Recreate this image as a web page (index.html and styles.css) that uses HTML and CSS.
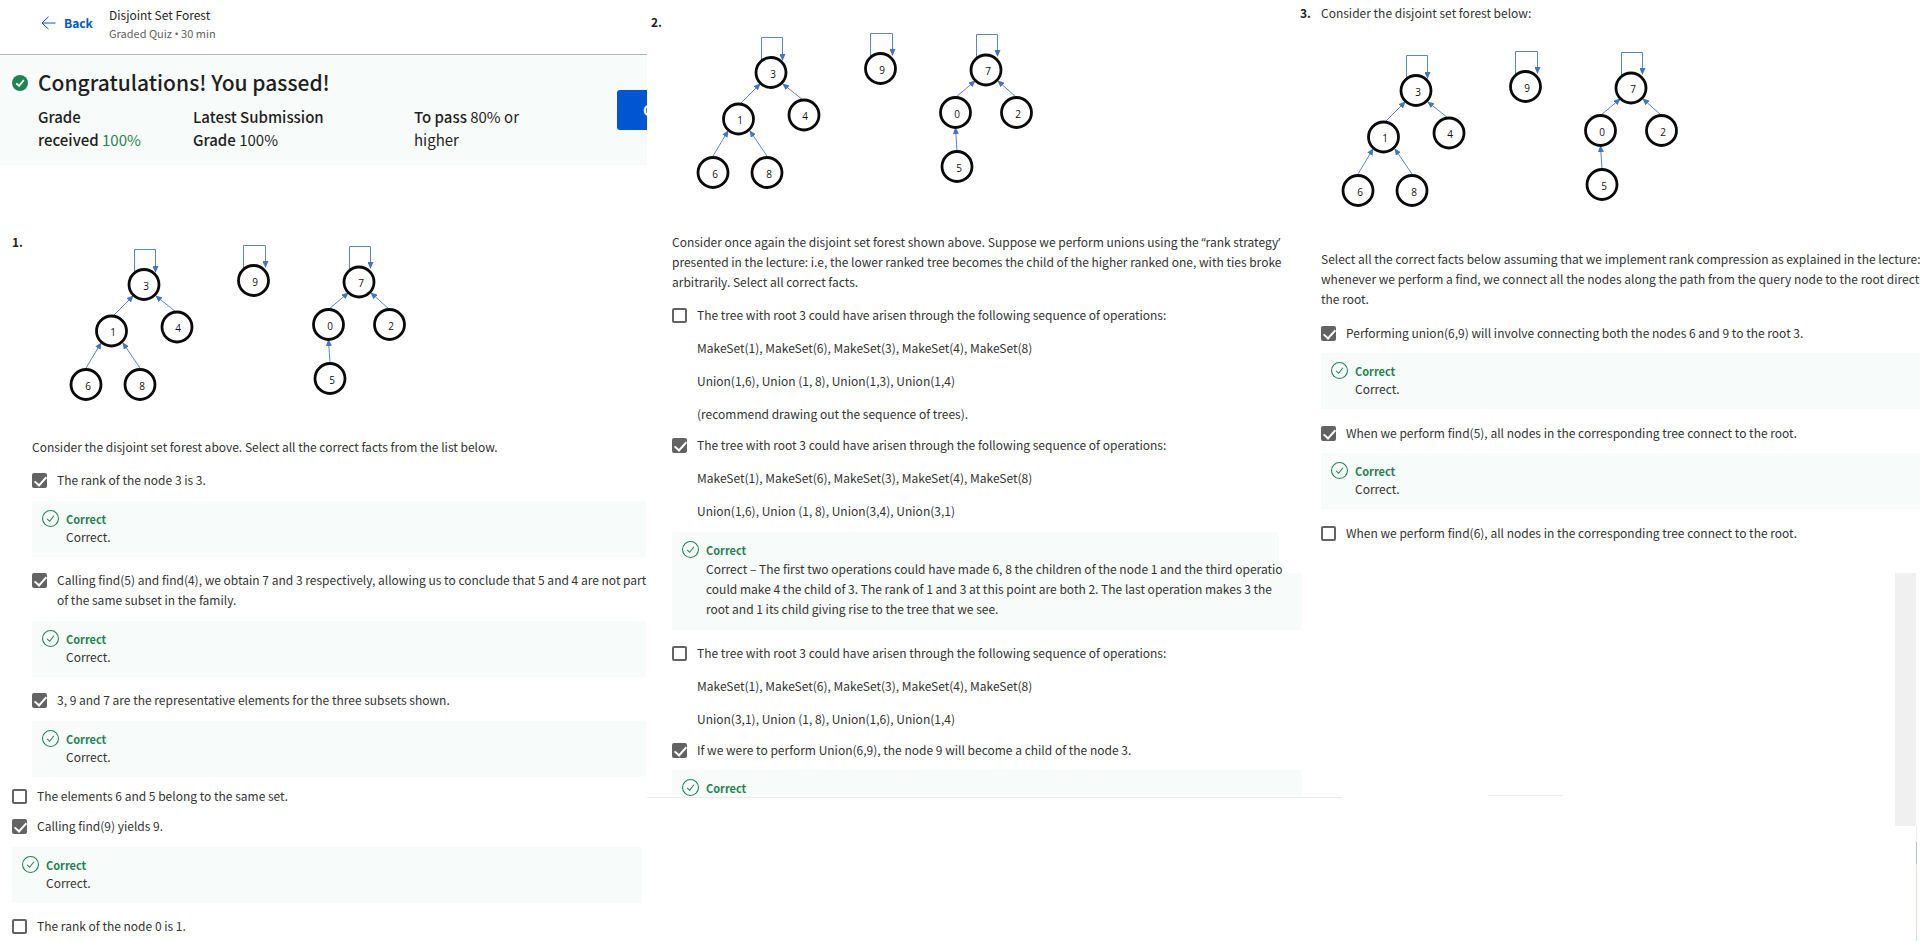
FILE: index.html
```html
<!DOCTYPE html>
<html lang="en">
<head>
<meta charset="utf-8">
<title>Disjoint Set Forest</title>
<link rel="stylesheet" href="styles.css">
</head>
<body>
<svg class="defs" aria-hidden="true">
  <defs>
    <marker id="tip" markerUnits="userSpaceOnUse" markerWidth="8" markerHeight="6" refX="6" refY="3" orient="auto"><path d="M0 0L7 3L0 6Z" fill="#4472c4"/></marker>
    <symbol id="forest" viewBox="0 0 360 180">
      <g fill="none" stroke="#5b84cc" stroke-width="1">
        <path d="M74.5 38V14.500H95.500V37" marker-end="url(#tip)"/>
        <path d="M183.500 34V10.500H205.500V32" marker-end="url(#tip)"/>
        <path d="M289.500 35V11.500H310.500V33" marker-end="url(#tip)"/>
        <path d="M53 81L73 61" marker-end="url(#tip)"/>
        <path d="M116 77L96 61" marker-end="url(#tip)"/>
        <path d="M26 133L41 108" marker-end="url(#tip)"/>
        <path d="M80 133L63 108" marker-end="url(#tip)"/>
        <path d="M269 74L288 58" marker-end="url(#tip)"/>
        <path d="M329 74L311 58" marker-end="url(#tip)"/>
        <path d="M270 128L268.500 105" marker-end="url(#tip)"/>
      </g>
      <g fill="#fff" stroke="#0a0a0a" stroke-width="2.800">
        <circle cx="84" cy="49.500" r="15"/><circle cx="193.500" cy="45.500" r="15"/><circle cx="299" cy="47" r="15"/>
        <circle cx="51.500" cy="96" r="15"/><circle cx="117" cy="92" r="15"/><circle cx="268.500" cy="89.500" r="15"/>
        <circle cx="329.500" cy="89.500" r="15"/><circle cx="26" cy="149.500" r="15"/><circle cx="80" cy="149.500" r="15"/>
        <circle cx="270" cy="143.500" r="15"/>
      </g>
      <g class="labels">
        <text x="86" y="55">3</text><text x="195" y="51">9</text><text x="301" y="52">7</text>
        <text x="53" y="101">1</text><text x="118" y="97">4</text><text x="270" y="95">0</text>
        <text x="331" y="95">2</text><text x="28" y="155">6</text><text x="82" y="155">8</text><text x="272" y="149">5</text>
      </g>
    </symbol>
    <symbol id="ring" viewBox="0 0 16 16"><circle cx="8" cy="8" r="7.500" fill="none" stroke="#1f8354"/><path d="M4.800 8.300L7.200 10.600L11.200 5.400" fill="none" stroke="#1f8354"/></symbol>
  </defs>
</svg>
<main class="sheet">
  <div class="col first">
    <header class="top">
      <a class="back" href="#"><svg viewBox="0 0 15 14" width="15" height="14" fill="none" stroke="#0056d2"><path d="M14.500 7H1M7.500 .800L1 7L7.500 13.200"/></svg>Back</a>
      <div class="heading"><h1>Disjoint Set Forest</h1><p>Graded Quiz <span class="mark">•</span> 30 min</p></div>
    </header>
    <section class="banner">
      <svg class="passed" viewBox="0 0 16 16" width="16" height="16"><circle cx="8" cy="8" r="8" fill="#1f8354"/><path d="M4.300 8.400L7 10.900L11.800 5.200" fill="none" stroke="#fff" stroke-width="1.800"/></svg>
      <div class="result">
        <h2>Congratulations! You passed!</h2>
        <div class="grades">
          <p class="g1"><b>Grade<br>received</b> <span class="green">100%</span></p>
          <p class="g2"><b>Latest Submission<br>Grade</b> 100%</p>
          <p class="g3"><b>To pass</b> 80% or<br>higher</p>
        </div>
      </div>
      <button class="go" type="button">Go to next item</button>
    </section>
    <section class="question q1">
      <div class="num">1.</div>
      <div class="body">
        <svg class="figure" role="img" aria-label="Disjoint set forest"><use href="#forest"/></svg>
        <p class="prompt">Consider the disjoint set forest above. Select all the correct facts from the list below.</p>
        <label class="option"><input type="checkbox" checked><span>The rank of the node 3 is 3.</span></label>
        <div class="feedback"><svg class="ring"><use href="#ring"/></svg><div><b>Correct</b><p>Correct.</p></div></div>
        <label class="option"><input type="checkbox" checked><span>Calling find(5) and find(4), we obtain 7 and 3 respectively, allowing us to conclude that 5 and 4 are not part<br>of the same subset in the family.</span></label>
        <div class="feedback"><svg class="ring"><use href="#ring"/></svg><div><b>Correct</b><p>Correct.</p></div></div>
        <label class="option"><input type="checkbox" checked><span>3, 9 and 7 are the representative elements for the three subsets shown.</span></label>
        <div class="feedback"><svg class="ring"><use href="#ring"/></svg><div><b>Correct</b><p>Correct.</p></div></div>
      </div>
    </section>
    <section class="rest">
      <label class="option"><input type="checkbox"><span>The elements 6 and 5 belong to the same set.</span></label>
      <label class="option"><input type="checkbox" checked><span>Calling find(9) yields 9.</span></label>
      <div class="feedback"><svg class="ring"><use href="#ring"/></svg><div><b>Correct</b><p>Correct.</p></div></div>
      <label class="option"><input type="checkbox"><span>The rank of the node 0 is 1.</span></label>
    </section>
  </div>

  <div class="col second">
    <section class="question q2">
      <div class="num">2.</div>
      <div class="body">
        <svg class="figure" role="img" aria-label="Disjoint set forest"><use href="#forest"/></svg>
        <p class="prompt">Consider once again the disjoint set forest shown above. Suppose we perform unions using the <span class="mark">“</span>rank strategy<span class="mark">’</span><br>presented in the lecture: i.e, the lower ranked tree becomes the child of the higher ranked one, with ties broke<br>arbitrarily. Select all correct facts.</p>
        <label class="option"><input type="checkbox"><span class="steps"><span>The tree with root 3 could have arisen through the following sequence of operations:</span><span>MakeSet(1), MakeSet(6), MakeSet(3), MakeSet(4), MakeSet(8)</span><span>Union(1,6), Union (1, 8), Union(1,3), Union(1,4)</span><span>(recommend drawing out the sequence of trees).</span></span></label>
        <label class="option"><input type="checkbox" checked><span class="steps"><span>The tree with root 3 could have arisen through the following sequence of operations:</span><span>MakeSet(1), MakeSet(6), MakeSet(3), MakeSet(4), MakeSet(8)</span><span>Union(1,6), Union (1, 8), Union(3,4), Union(3,1)</span></span></label>
        <div class="feedback notched"><svg class="ring"><use href="#ring"/></svg><div><b>Correct</b><p>Correct – The first two operations could have made 6, 8 the children of the node 1 and the third operatio<br>could make 4 the child of 3. The rank of 1 and 3 at this point are both 2. The last operation makes 3 the<br>root and 1 its child giving rise to the tree that we see.</p></div></div>
        <label class="option"><input type="checkbox"><span class="steps"><span>The tree with root 3 could have arisen through the following sequence of operations:</span><span>MakeSet(1), MakeSet(6), MakeSet(3), MakeSet(4), MakeSet(8)</span><span>Union(3,1), Union (1, 8), Union(1,6), Union(1,4)</span></span></label>
        <label class="option"><input type="checkbox" checked><span>If we were to perform Union(6,9), the node 9 will become a child of the node 3.</span></label>
        <div class="feedback cut"><svg class="ring"><use href="#ring"/></svg><div><b>Correct</b></div></div>
      </div>
    </section>
    <hr class="line">
  </div>

  <div class="col third">
    <section class="question q3">
      <div class="num">3.</div>
      <div class="body">
        <p class="prompt">Consider the disjoint set forest below:</p>
        <svg class="figure" role="img" aria-label="Disjoint set forest"><use href="#forest"/></svg>
        <p class="prompt">Select all the correct facts below assuming that we implement rank compression as explained in the lecture:<br>whenever we perform a find, we connect all the nodes along the path from the query node to the root directly<br>the root.</p>
        <label class="option"><input type="checkbox" checked><span>Performing union(6,9) will involve connecting both the nodes 6 and 9 to the root 3.</span></label>
        <div class="feedback"><svg class="ring"><use href="#ring"/></svg><div><b>Correct</b><p>Correct.</p></div></div>
        <label class="option"><input type="checkbox" checked><span>When we perform find(5), all nodes in the corresponding tree connect to the root.</span></label>
        <div class="feedback"><svg class="ring"><use href="#ring"/></svg><div><b>Correct</b><p>Correct.</p></div></div>
        <label class="option"><input type="checkbox"><span>When we perform find(6), all nodes in the corresponding tree connect to the root.</span></label>
      </div>
    </section>
    <div class="tail"><hr class="dash"><div class="track"></div></div>
    <div class="edge"></div>
  </div>
</main>
</body>
</html>
```

FILE: styles.css
```css
* { box-sizing: border-box; }
body { margin: 0; background: #fff; color: #333; font: 12px/20px "Noto Sans CJK SC", "Noto Sans", sans-serif; }
h1, h2, p { margin: 0; font-weight: 400; }
b { font-weight: 700; }
.defs { position: absolute; width: 0; height: 0; }
.sheet { display: grid; grid-template-columns: 647fr 653fr 620fr; min-height: 100vh; overflow: hidden; }
.col { min-width: 0; white-space: nowrap; }
.first, .third { overflow: hidden; }
.mark { font-family: "Open Sans", sans-serif; line-height: 1; }

.top { display: flex; align-items: flex-start; height: 55px; padding: 6px 0 0 41px; border-bottom: 1px solid #b5b5b5; }
.back { display: flex; align-items: center; gap: 8px; width: 68px; padding-top: 7px; color: #0056d2; font-weight: 700; text-decoration: none; }
.heading h1 { color: #1f1f1f; font-size: 12px; line-height: 18px; }
.heading p { color: #636363; font-size: 11px; line-height: 18px; }

.banner { display: flex; align-items: flex-start; height: 110px; background: #f7fbf9; color: #1f1f1f; }
.passed { flex: none; margin: 20px 10px 0 12px; }
.result { flex: none; width: 579px; padding-top: 11px; }
.result h2 { font-size: 21px; line-height: 32px; font-weight: 500; }
.grades { display: flex; padding-top: 7px; font-size: 15px; line-height: 23px; }
.grades b { font-weight: 500; }
.g1 { width: 155px; }
.g2 { width: 221px; }
.green { color: #1f8354; }
.go { flex: none; height: 40px; margin-top: 35px; padding: 0 26px; border: 0; border-radius: 3px; background: #0056d2; color: #fff; font: 700 14px "Noto Sans CJK SC", sans-serif; }

.question { display: grid; grid-template-columns: 20px minmax(0, 1fr); }
.num { color: #1f1f1f; font-weight: 700; }
.figure { display: block; width: 360px; height: 180px; }
.labels { fill: #111; font: 10px "Open Sans", sans-serif; text-anchor: middle; }

.option { display: flex; gap: 10px; }
.option input { appearance: none; flex: none; position: relative; width: 15px; height: 15px; margin: 3px 0 0; border: 2px solid #636363; border-radius: 2px; background: #fff; }
.option input:checked { background: #636363; }
.option input:checked::after { content: ""; position: absolute; left: 3px; top: -1px; width: 5px; height: 10px; border: solid #fff; border-width: 0 2px 2px 0; transform: rotate(42deg); }
.steps { display: grid; gap: 13px; padding-bottom: 1px; }

.feedback { display: flex; gap: 7px; margin: 11px 0 13px; padding: 9px 0 11px 10px; background: #f7fbf9; line-height: 18px; }
.feedback b { display: block; color: #1f8354; font-size: 11px; }
.ring { flex: none; width: 17px; height: 17px; }

.q1 { padding: 67px 1px 0 12px; }
.q1 .figure { margin: 3px 0 0 28px; }
.q1 .prompt { padding: 22px 0 13px; }
.q1 .feedback:last-child { margin-bottom: 9px; }
.rest { padding: 0 5px 0 12px; }
.rest .option + .option { margin-top: 10px; }

.q2 { grid-template-columns: 21px minmax(0, 1fr); padding: 12px 0 0 4px; }
.q2 .figure { margin: 11px 0 29px 15px; }
.q2 .body > .option { margin-top: 10px; }
.q2 .prompt + .option { margin-top: 13px; }
.q2 .option + .feedback { margin: 10px -2px 13px 0; }
.notched { background: linear-gradient(#f7fbf9, #f7fbf9) 0 0 / calc(100% - 23px) 41px no-repeat, linear-gradient(#f7fbf9, #f7fbf9) 0 41px / 100% 100% no-repeat; }
.notched p { line-height: 20px; }
.q2 .option + .cut { height: 27px; margin-bottom: 0; overflow: hidden; }
.line { width: calc(100% + 42px); height: 1px; margin: 0; border: 0; background: #ececec; }

.q3 { grid-template-columns: 21px minmax(0, 1fr); padding-top: 3px; }
.q3 .figure { margin: 18px 0 28px 11px; }
.q3 .option { padding-top: 14px; }
.q3 .feedback { margin: 10px 0 0; }
.tail { display: flex; justify-content: space-between; margin-top: 30px; padding-right: 4px; }
.dash { width: 74px; height: 1px; margin: 222px 0 0 188px; border: 0; background: #ececec; }
.track { width: 21px; height: 253px; background: #f0f0f0; }
.edge { width: 1px; height: 115px; margin: 0 3px 0 auto; background: linear-gradient(#eee 0 16px, #b9c2c8 16px 38px, #f5dcd8 38px 108px, #c4dce8 108px); }
```
